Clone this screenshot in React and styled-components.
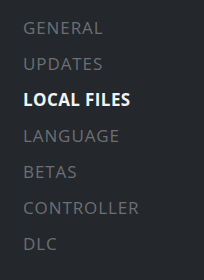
import React from 'react';
import styled, { createGlobalStyle } from 'styled-components';

const Global = createGlobalStyle`
    html, body {
        margin: 0;
        padding: 0;
        background: #24272c;
    }
`;

const Menu = styled.nav`
    width: 204px;
    height: 280px;
    box-sizing: border-box;
    padding: 16px 0 0 23px;
    display: flex;
    flex-direction: column;
    font-family: "Open Sans", "Liberation Sans", sans-serif;
`;

const Item = styled.div`
    height: 36px;
    line-height: 24px;
    font-size: 17px;
    letter-spacing: ${p => (p.active ? '0.4px' : '0.9px')};
    font-weight: ${p => (p.active ? 700 : 500)};
    color: ${p => (p.active ? '#f1f2f3' : '#6c6f74')};
`;

const items = ['GENERAL', 'UPDATES', 'LOCAL FILES', 'LANGUAGE', 'BETAS', 'CONTROLLER', 'DLC'];

export default function App() {
    return (
        <>
            <Global />
            <Menu>
                {items.map(name => (
                    <Item key={name} active={name === 'LOCAL FILES'}>{name}</Item>
                ))}
            </Menu>
        </>
    );
}
